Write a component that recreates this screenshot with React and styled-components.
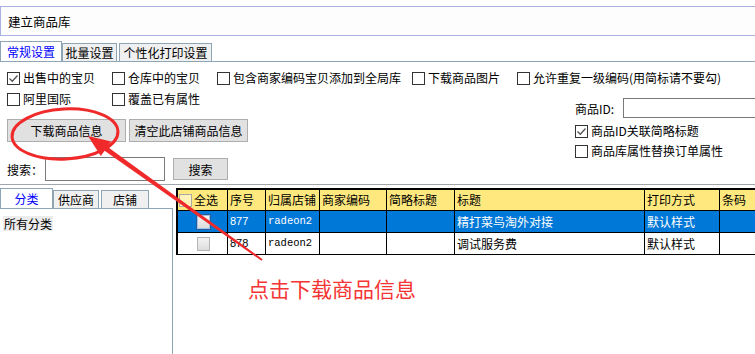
import React from "react";
import styled, { createGlobalStyle } from "styled-components";

const GlobalStyle = createGlobalStyle`
  html, body {
    margin: 0;
    padding: 0;
    background: #ffffff;
  }
  body {
    font-family: "Noto Sans CJK SC", "Liberation Sans", sans-serif;
    font-size: 12px;
    color: #000;
    overflow: hidden;
  }
  * {
    box-sizing: border-box;
  }
`;

const Window = styled.div`
  position: relative;
  width: 755px;
  height: 354px;
  overflow: hidden;
  background: #fff;
  display: flex;
  flex-direction: column;
`;

const TitleBar = styled.div`
  margin-top: 6px;
  height: 30px;
  flex-shrink: 0;
  border: 1px solid #a9b1e2;
  border-right: none;
  background: #fdfdfd;
  display: flex;
  align-items: center;
  padding-left: 7px;
  font-size: 12.5px;
`;

const TabStrip = styled.div`
  display: flex;
  align-items: flex-end;
  height: 20px;
  margin-top: ${(p) => p.$top}px;
  flex-shrink: 0;
`;

const Tab = styled.div`
  width: ${(p) => p.$w}px;
  height: ${(p) => (p.$active ? 20 : 18)}px;
  margin-left: ${(p) => p.$gap || 0}px;
  border: 1px solid #8ea5b6;
  border-bottom: none;
  background: ${(p) => (p.$active ? "#ffffff" : "#f0f0f0")};
  color: ${(p) => (p.$active ? "#0000ff" : "#000")};
  display: flex;
  align-items: center;
  justify-content: center;
  line-height: 1;
  font-size: 12px;
  white-space: nowrap;
`;

const Settings = styled.div`
  height: 124px;
  flex-shrink: 0;
  border-top: 1px solid #8ea5b6;
  border-bottom: 1px solid #a0a6ab;
  padding-top: 8px;
`;

const CheckRow = styled.div`
  display: grid;
  grid-template-columns: ${(p) => p.$cols};
  padding-left: ${(p) => p.$pad || 0}px;
  margin-top: ${(p) => p.$top || 0}px;
  height: 16px;
`;

const CheckItem = styled.label`
  display: flex;
  align-items: center;
  gap: 3px;
  white-space: nowrap;
  line-height: 16px;
`;

const Box = styled.span`
  width: 13px;
  height: 13px;
  flex-shrink: 0;
  border: 1px solid #333;
  background: #fff;
  display: flex;
  align-items: center;
  justify-content: center;
`;

const SettingsBody = styled.div`
  display: grid;
  grid-template-columns: 575px 1fr;
`;

const LeftCol = styled.div`
  padding-left: 7px;
  display: flex;
  flex-direction: column;
`;

const RightCol = styled.div`
  display: flex;
  flex-direction: column;
`;

const ButtonRow = styled.div`
  display: flex;
  gap: 3px;
  margin-top: 12px;
`;

const Button = styled.div`
  width: ${(p) => p.$w}px;
  height: ${(p) => p.$h || 23}px;
  border: 1px solid #adadad;
  background: #e1e1e1;
  display: flex;
  align-items: center;
  justify-content: center;
  white-space: nowrap;
  font-size: 12px;
`;

const SearchRow = styled.div`
  display: flex;
  align-items: center;
  margin-top: 15px;
  height: 24px;
`;

const Label = styled.span`
  white-space: nowrap;
  width: ${(p) => (p.$w ? `${p.$w}px` : "auto")};
  flex-shrink: 0;
`;

const Input = styled.div`
  width: ${(p) => p.$w}px;
  height: ${(p) => p.$h}px;
  border: 1px solid #7a7a7a;
  background: #fff;
  flex-shrink: 0;
  margin-right: ${(p) => p.$mr || 0}px;
`;

const IdRow = styled.div`
  display: flex;
  align-items: center;
  margin-top: 12px;
  height: 20px;
`;

const RightCheck = styled.div`
  margin-top: ${(p) => p.$top}px;
  height: 16px;
`;

const Lower = styled.div`
  flex: 1;
  display: grid;
  grid-template-columns: 173px 3px 1fr;
`;

const SidePanel = styled.div`
  display: flex;
  flex-direction: column;
`;

const SideBody = styled.div`
  flex: 1;
  border-top: 1px solid #8ea5b6;
  border-right: 1px solid #8ea5b6;
  padding: 6px 3px;
`;

const TreeItem = styled.span`
  display: inline-block;
  background: #ececec;
  padding: 0 1px;
  line-height: 15px;
`;

const TableWrap = styled.div`
  margin-top: 3px;
  border-top: 2px solid #000;
  border-left: 2px solid #000;
  display: grid;
  grid-template-columns: 50px 38px 54px 67px 68px 190px 75px 60px;
  grid-auto-rows: min-content;
  background: #fff;
`;

const HeadCell = styled.div`
  height: 21px;
  background: #ffe97f;
  border-right: 1px solid #000;
  border-bottom: 1px solid #000;
  padding-left: 2px;
  display: flex;
  align-items: center;
  white-space: nowrap;
  line-height: 1;
`;

const Cell = styled.div`
  height: 22px;
  background: ${(p) => (p.$sel ? "#0078d7" : "#fff")};
  color: ${(p) => (p.$sel ? "#fff" : "#000")};
  border-right: 1px solid #000;
  border-bottom: 1px solid #000;
  padding-left: 2px;
  display: flex;
  align-items: center;
  justify-content: ${(p) => (p.$center ? "center" : "flex-start")};
  white-space: nowrap;
  font-family: ${(p) =>
    p.$mono
      ? '"Liberation Mono", monospace'
      : p.$num
      ? '"Liberation Sans", sans-serif'
      : '"Noto Sans CJK SC", sans-serif'};
  font-size: ${(p) => (p.$mono ? 10.5 : p.$num ? 11 : 12)}px;
  line-height: 1;
`;

const RowBox = styled.span`
  width: 13px;
  height: 14px;
  border: 1px solid ${(p) => (p.$sel ? "#9ec3e6" : "#b5b5b5")};
  background: linear-gradient(#f4f4f4, #dcdcdc);
  outline: ${(p) => (p.$sel ? "1px solid #2b5c99" : "none")};
`;

const HeadBox = styled.span`
  width: 13px;
  height: 13px;
  margin-right: 2px;
  margin-left: -1px;
  border: 1px solid #a8a8a8;
  background: #fff3b8;
`;

const Overlay = styled.svg`
  position: absolute;
  left: 0;
  top: 0;
  pointer-events: none;
`;

const Note = styled.div`
  position: absolute;
  left: 248px;
  top: 276px;
  font-size: 21px;
  line-height: 24px;
  color: #f53434;
  white-space: nowrap;
`;

const Check = ({ checked, children }) => (
  <CheckItem>
    <Box>
      {checked && (
        <svg width="11" height="11" viewBox="0 0 11 11">
          <path d="M1.5 5.5 L4.3 8.3 L9.5 2.5" fill="none" stroke="#555" strokeWidth="1.3" />
        </svg>
      )}
    </Box>
    {children}
  </CheckItem>
);

const columns = ["全选", "序号", "归属店铺", "商家编码", "简略标题", "标题", "打印方式", "条码"];

const rows = [
  { no: "877", shop: "radeon2", title: "精打菜鸟淘外对接", print: "默认样式", sel: true },
  { no: "878", shop: "radeon2", title: "调试服务费", print: "默认样式", sel: false },
];

export default function App() {
  return (
    <>
      <GlobalStyle />
      <Window>
        <TitleBar>建立商品库</TitleBar>
        <TabStrip $top={5}>
          <Tab $w={62} $active>常规设置</Tab>
          <Tab $w={55}>批量设置</Tab>
          <Tab $w={93} $gap={2}>个性化打印设置</Tab>
        </TabStrip>
        <Settings>
          <CheckRow $cols="105px 105px 195px 105px auto" $pad={7}>
            <Check checked>出售中的宝贝</Check>
            <Check>仓库中的宝贝</Check>
            <Check>包含商家编码宝贝添加到全局库</Check>
            <Check>下载商品图片</Check>
            <Check>允许重复一级编码(用简标请不要勾)</Check>
          </CheckRow>
          <SettingsBody>
            <LeftCol>
              <CheckRow $cols="105px 105px" $top={5}>
                <Check>阿里国际</Check>
                <Check>覆盖已有属性</Check>
              </CheckRow>
              <ButtonRow>
                <Button $w={119}>下载商品信息</Button>
                <Button $w={119}>清空此店铺商品信息</Button>
              </ButtonRow>
              <SearchRow>
                <Label $w={38}>搜索：</Label>
                <Input $w={120} $h={24} $mr={8} />
                <Button $w={55} $h={22}>搜索</Button>
              </SearchRow>
            </LeftCol>
            <RightCol>
              <IdRow>
                <Label $w={48}>商品ID:</Label>
                <Input $w={140} $h={20} />
              </IdRow>
              <RightCheck $top={5}>
                <Check checked>商品ID关联简略标题</Check>
              </RightCheck>
              <RightCheck $top={4}>
                <Check>商品库属性替换订单属性</Check>
              </RightCheck>
            </RightCol>
          </SettingsBody>
        </Settings>
        <Lower>
          <SidePanel>
            <TabStrip $top={3}>
              <Tab $w={53} $active>分类</Tab>
              <Tab $w={46}>供应商</Tab>
              <Tab $w={48} $gap={2}>店铺</Tab>
            </TabStrip>
            <SideBody>
              <TreeItem>所有分类</TreeItem>
            </SideBody>
          </SidePanel>
          <div />
          <div>
            <TableWrap>
              {columns.map((c, i) => (
                <HeadCell key={c}>
                  {i === 0 && <HeadBox />}
                  {c}
                </HeadCell>
              ))}
              {rows.map((r) => (
                <React.Fragment key={r.no}>
                  <Cell $sel={r.sel} $center>
                    <RowBox $sel={r.sel} />
                  </Cell>
                  <Cell $sel={r.sel} $num>{r.no}</Cell>
                  <Cell $sel={r.sel} $mono>{r.shop}</Cell>
                  <Cell $sel={r.sel} />
                  <Cell $sel={r.sel} />
                  <Cell $sel={r.sel}>{r.title}</Cell>
                  <Cell $sel={r.sel}>{r.print}</Cell>
                  <Cell $sel={r.sel} />
                </React.Fragment>
              ))}
            </TableWrap>
          </div>
        </Lower>

        <Overlay width="755" height="354" viewBox="0 0 755 354">
          <ellipse cx="65" cy="134" rx="53" ry="25" fill="none" stroke="#f02a2a" strokeWidth="3" transform="rotate(-3 65 134)" />
          <polygon
            points="88,136 111.2,141.4 107.4,146.7 262.6,259.2 261.4,260.8 104.6,150.7 100.8,156.1"
            fill="#f02a2a"
          />
        </Overlay>
        <Note>点击下载商品信息</Note>
      </Window>
    </>
  );
}
